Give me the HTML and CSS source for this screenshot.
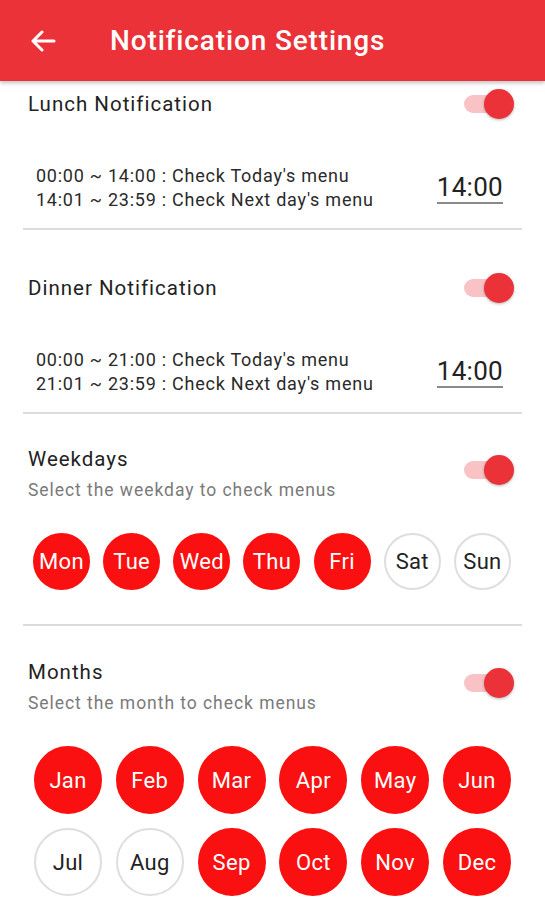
FILE: index.html
```html
<!DOCTYPE html>
<html>
<head>
<meta charset="utf-8">
<link rel="stylesheet" href="styles.css">
</head>
<body>
<header class="appbar">
  <svg class="back" width="26" height="22" viewBox="0 0 26 22"><path d="M24 11H3M12 2L3 11l9 9" fill="none" stroke="#fff" stroke-width="3" stroke-linecap="round" stroke-linejoin="round"/></svg>
  <h1 class="title">Notification Settings</h1>
</header>
<main class="content">
  <section class="section first">
    <div class="row">
      <span class="label">Lunch Notification</span>
      <span class="toggle"><span class="track"></span><span class="thumb"></span></span>
    </div>
    <div class="timebox">
      <div class="desc">
        <div>00:00 ~ 14:00 : Check Today's menu</div>
        <div>14:01 ~ 23:59 : Check Next day's menu</div>
      </div>
      <span class="time">14:00</span>
    </div>
  </section>
  <section class="section">
    <div class="row">
      <span class="label">Dinner Notification</span>
      <span class="toggle"><span class="track"></span><span class="thumb"></span></span>
    </div>
    <div class="timebox">
      <div class="desc">
        <div>00:00 ~ 21:00 : Check Today's menu</div>
        <div>21:01 ~ 23:59 : Check Next day's menu</div>
      </div>
      <span class="time">14:00</span>
    </div>
  </section>
  <section class="section sel">
    <div class="row two">
      <div>
        <div class="label">Weekdays</div>
        <div class="sub">Select the weekday to check menus</div>
      </div>
      <span class="toggle"><span class="track"></span><span class="thumb"></span></span>
    </div>
    <div class="days">
      <span class="chip on">Mon</span><span class="chip on">Tue</span><span class="chip on">Wed</span><span class="chip on">Thu</span><span class="chip on">Fri</span><span class="chip">Sat</span><span class="chip">Sun</span>
    </div>
  </section>
  <section class="section sel last">
    <div class="row two">
      <div>
        <div class="label">Months</div>
        <div class="sub">Select the month to check menus</div>
      </div>
      <span class="toggle"><span class="track"></span><span class="thumb"></span></span>
    </div>
    <div class="months">
      <span class="chip big on">Jan</span><span class="chip big on">Feb</span><span class="chip big on">Mar</span><span class="chip big on">Apr</span><span class="chip big on">May</span><span class="chip big on">Jun</span>
      <span class="chip big">Jul</span><span class="chip big">Aug</span><span class="chip big on">Sep</span><span class="chip big on">Oct</span><span class="chip big on">Nov</span><span class="chip big on">Dec</span>
    </div>
  </section>
</main>
</body>
</html>
```
FILE: styles.css
```css
* { box-sizing: border-box; }
html, body { margin: 0; padding: 0; background: #fff; }
body { font-family: Roboto, "Liberation Sans", sans-serif; color: #222; width: 545px; height: 900px; overflow: hidden; }

.appbar {
  height: 81px;
  background: #ea3238;
  display: flex;
  align-items: center;
  padding-left: 30px;
  box-shadow: 0 2px 4px rgba(0,0,0,0.25);
  position: relative;
  z-index: 1;
}
.title {
  margin: 0 0 0 54px;
  color: #fff;
  font-size: 28px;
  font-weight: 500;
  letter-spacing: 0.85px;
}

.content { padding: 0 23px; }
.section { border-bottom: 2px solid #dcdcdc; padding-top: 35px; }
.section.first { padding-top: 0; }
.section.last { border-bottom: none; }

.row {
  display: flex;
  align-items: center;
  justify-content: space-between;
  height: 46px;
  padding-left: 5px;
}
.label { font-size: 20.5px; color: #222; letter-spacing: 1px; }
.sub { font-size: 17.5px; color: #7a7a7a; margin-top: 9px; letter-spacing: 0.95px; }

.toggle { position: relative; width: 50px; height: 30px; margin-right: 8px; }
.track {
  position: absolute; left: 0; top: 6px; width: 42px; height: 18px;
  border-radius: 9px; background: #f9c3c6;
}
.thumb {
  position: absolute; right: 0; top: 0; width: 30px; height: 30px;
  border-radius: 50%; background: #ea3238;
  box-shadow: 0 1px 3px rgba(0,0,0,0.3);
}

.timebox {
  display: flex;
  align-items: center;
  justify-content: space-between;
  padding: 37px 19px 17px 13px;
}
.desc { font-size: 18px; line-height: 23.5px; color: #2a2a2a; letter-spacing: 0.75px; }
.time {
  font-size: 26px;
  color: #222;
  border-bottom: 2px solid #8a8a8a;
  line-height: 30px;
  letter-spacing: 0.3px;
}

.section.sel { padding-top: 33px; }
.row.two { height: auto; align-items: flex-start; }
.row.two .toggle { margin-top: 8px; }

.days {
  display: flex;
  justify-content: space-between;
  padding: 33px 11px 34px 10px;
}
.chip {
  width: 57px; height: 57px; border-radius: 50%;
  display: flex; align-items: center; justify-content: center;
  font-size: 22px; color: #222; letter-spacing: 0.3px;
  border: 2px solid #dedede; background: #fff;
}
.chip.on { background: #fa1010; border-color: #fa1010; color: #fff; }

.section.last { padding-top: 34px; }
.months {
  display: grid;
  grid-template-columns: repeat(6, 68px);
  justify-content: space-between;
  row-gap: 14px;
  padding: 33px 11px 0 11px;
}
.chip.big { width: 68px; height: 68px; }
```
